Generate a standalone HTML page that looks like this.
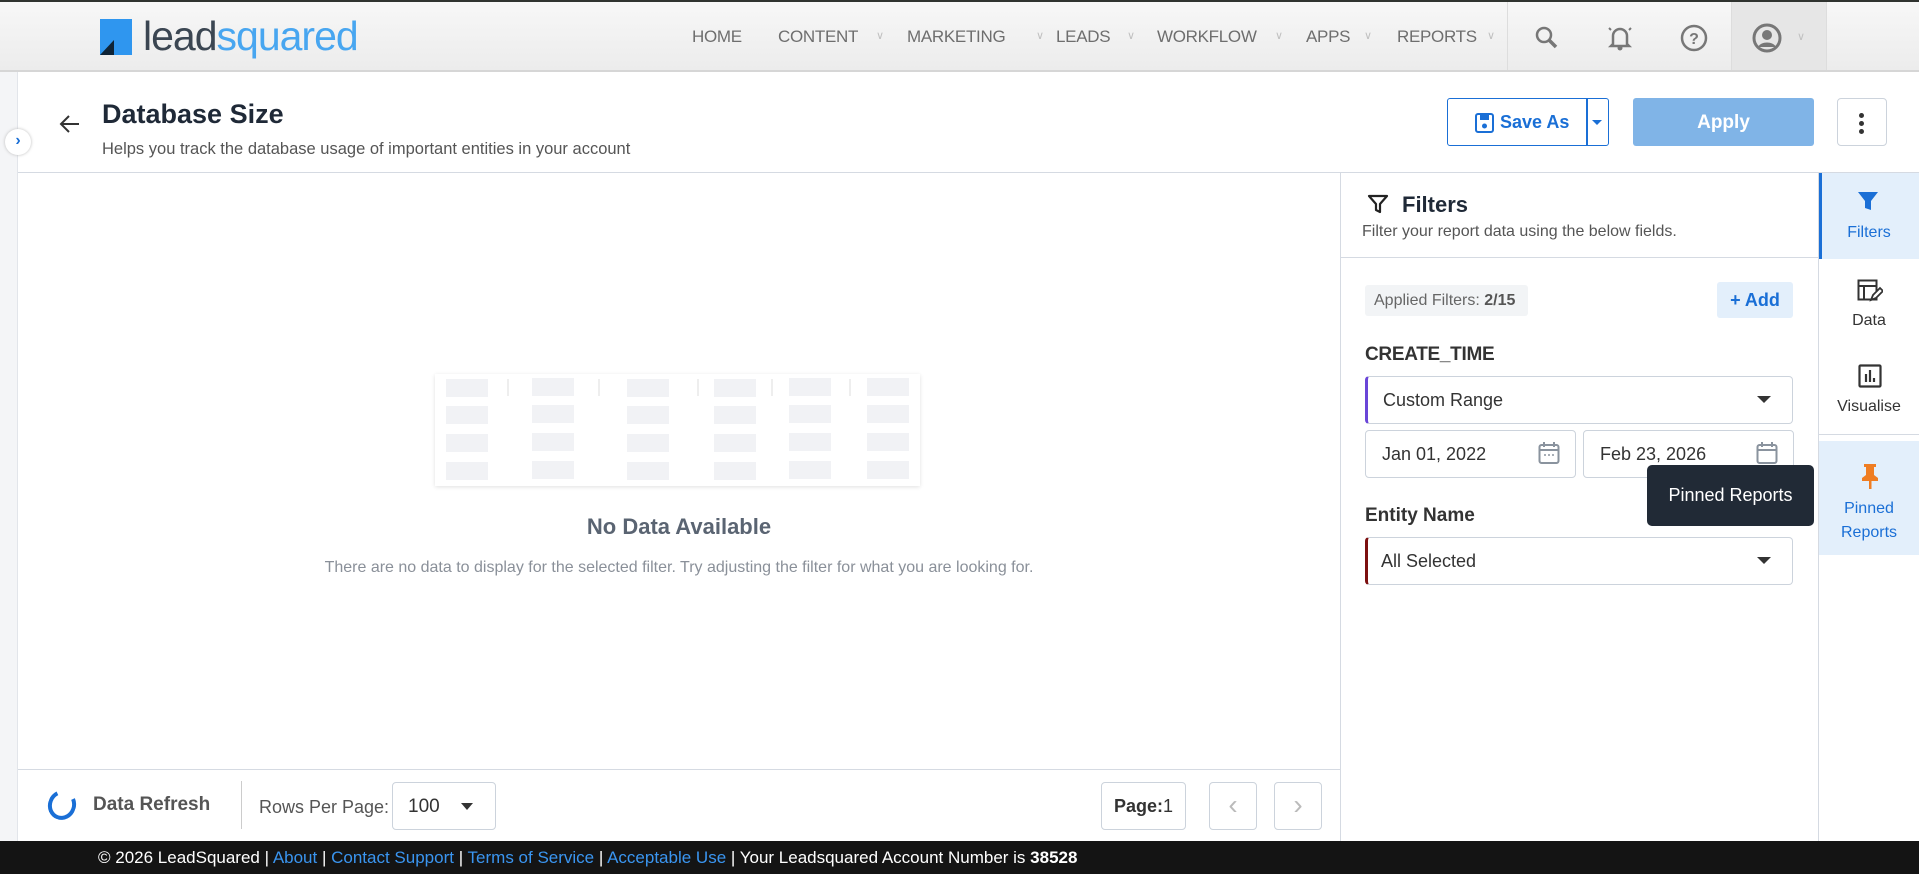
<!DOCTYPE html>
<html><head><meta charset="utf-8"><style>
*{box-sizing:border-box;margin:0;padding:0}
body{width:1919px;height:874px;overflow:hidden;font-family:"Liberation Sans",sans-serif;background:#fff;position:relative;color:#222}
.a{position:absolute}
.nav{left:0;top:0;width:1919px;height:72px;background:linear-gradient(#f7f7f7,#ececec);border-top:2px solid #2f332f;border-bottom:2px solid #d6d6d6}
.ni{top:27px;font-size:17px;color:#6e6e6e;letter-spacing:-0.3px}
.cv{top:29px;font-size:11px;color:#c0c0c0}
.bt{border:1px solid #ccd3dc;border-radius:4px;background:#fff}
.lbl{font-size:18px;color:#333}
</style></head><body>
<div class="a nav"></div>
<div class="a" style="left:100px;top:19px;width:32px;height:36px;background:#2f96ef"></div>
<div class="a" style="left:100px;top:40px;width:14px;height:15px;background:#0f2437"></div>
<div class="a" style="left:100px;top:40px;width:0;height:0;border-top:15px solid #2f96ef;border-right:14px solid transparent"></div>
<div class="a" style="left:143px;top:13px;font-size:41px;letter-spacing:-1px;color:#3b4652;font-weight:300">lead<span style="color:#48a6f0">squared</span></div>
<div class="a ni" style="left:692px">HOME</div>
<div class="a ni" style="left:778px">CONTENT</div><div class="a cv" style="left:876px">∨</div>
<div class="a ni" style="left:907px">MARKETING</div><div class="a cv" style="left:1036px">∨</div>
<div class="a ni" style="left:1056px">LEADS</div><div class="a cv" style="left:1127px">∨</div>
<div class="a ni" style="left:1157px">WORKFLOW</div><div class="a cv" style="left:1275px">∨</div>
<div class="a ni" style="left:1306px">APPS</div><div class="a cv" style="left:1364px">∨</div>
<div class="a ni" style="left:1397px">REPORTS</div><div class="a cv" style="left:1487px">∨</div>
<div class="a" style="left:1507px;top:2px;width:1px;height:68px;background:#ddd"></div>
<div class="a" style="left:1731px;top:2px;width:96px;height:68px;background:#e6e6e6;border-left:1px solid #ddd;border-right:1px solid #ddd"></div>
<svg class="a" style="left:1534px;top:25px" width="26" height="26" viewBox="0 0 26 26"><circle cx="10" cy="10" r="7" fill="none" stroke="#777" stroke-width="2.5"/><path d="M15 15l7 7" stroke="#777" stroke-width="3.5"/></svg>
<svg class="a" style="left:1607px;top:24px" width="26" height="28" viewBox="0 0 26 28"><path d="M6 20V12a7 7 0 0 1 14 0v8l2 2H4z" fill="none" stroke="#777" stroke-width="2.5"/><circle cx="13" cy="24" r="2.5" fill="#777"/><path d="M4 6l-2-2M22 6l2-2" stroke="#777" stroke-width="2"/></svg>
<svg class="a" style="left:1680px;top:24px" width="28" height="28" viewBox="0 0 28 28"><circle cx="14" cy="14" r="12" fill="none" stroke="#777" stroke-width="2.5"/><text x="14" y="20" font-size="16" font-weight="bold" text-anchor="middle" fill="#777" font-family="Liberation Sans">?</text></svg>
<svg class="a" style="left:1752px;top:23px" width="30" height="30" viewBox="0 0 30 30"><circle cx="15" cy="15" r="13" fill="none" stroke="#777" stroke-width="3"/><circle cx="15" cy="12" r="5" fill="#777"/><path d="M6 24c3-6 15-6 18 0" fill="#777"/></svg>
<div class="a cv" style="left:1797px;top:30px">∨</div>

<div class="a" style="left:0;top:72px;width:18px;height:769px;background:#f4f5f7;border-right:1px solid #e2e5ea"></div>
<div class="a" style="left:5px;top:129px;width:26px;height:26px;border-radius:50%;background:#fff;box-shadow:0 0 3px #bbb;color:#1a6fd6;font-size:16px;text-align:center;line-height:24px;font-weight:bold">›</div>
<svg class="a" style="left:59px;top:113px" width="22" height="22" viewBox="0 0 22 22"><path d="M20 11H3M10 3l-8 8 8 8" fill="none" stroke="#333" stroke-width="2"/></svg>
<div class="a" style="left:102px;top:99px;font-size:27px;font-weight:bold;color:#1f2937">Database Size</div>
<div class="a" style="left:102px;top:140px;font-size:16.5px;color:#555">Helps you track the database usage of important entities in your account</div>

<div class="a" style="left:1447px;top:98px;width:162px;height:48px;border:1.5px solid #1a6fd6;border-radius:3px"></div>
<div class="a" style="left:1586px;top:98px;width:1.5px;height:48px;background:#1a6fd6"></div>
<svg class="a" style="left:1475px;top:113px" width="19" height="20" viewBox="0 0 19 20"><rect x="1" y="1" width="17" height="18" rx="2" fill="none" stroke="#1a6fd6" stroke-width="2"/><rect x="5" y="2" width="9" height="5" fill="#1a6fd6"/><circle cx="9.5" cy="13" r="2.5" fill="#1a6fd6"/></svg>
<div class="a" style="left:1500px;top:112px;font-size:18px;font-weight:bold;color:#1a6fd6">Save As</div>
<div class="a" style="left:1592px;top:120px;border-left:5px solid transparent;border-right:5px solid transparent;border-top:5px solid #1a6fd6"></div>
<div class="a" style="left:1633px;top:98px;width:181px;height:48px;background:#80b4e7;border-radius:3px;color:#fff;font-size:19px;font-weight:bold;text-align:center;line-height:50px">Apply</div>
<div class="a bt" style="left:1837px;top:98px;width:50px;height:48px"></div>
<div class="a" style="left:1859px;top:113px;width:5px;height:5px;border-radius:50%;background:#333;box-shadow:0 8px 0 #333,0 16px 0 #333"></div>

<div class="a" style="left:18px;top:172px;width:1901px;height:1px;background:#d5dae2"></div>

<div class="a" style="left:435px;top:374px;width:485px;height:112px;background:#fff;box-shadow:0 1px 4px rgba(0,0,0,.12)"></div>
<div class="a" style="left:446px;top:379px;width:42px;height:18px;background:#f1f2f5;box-shadow:0 27px 0 #f1f2f5,0 55px 0 #f1f2f5,0 83px 0 #f1f2f5"></div>
<div class="a" style="left:532px;top:378px;width:42px;height:18px;background:#f1f2f5;box-shadow:0 27px 0 #f1f2f5,0 55px 0 #f1f2f5,0 83px 0 #f1f2f5"></div>
<div class="a" style="left:627px;top:379px;width:42px;height:18px;background:#f1f2f5;box-shadow:0 27px 0 #f1f2f5,0 55px 0 #f1f2f5,0 83px 0 #f1f2f5"></div>
<div class="a" style="left:714px;top:379px;width:42px;height:18px;background:#f1f2f5;box-shadow:0 27px 0 #f1f2f5,0 55px 0 #f1f2f5,0 83px 0 #f1f2f5"></div>
<div class="a" style="left:789px;top:378px;width:42px;height:18px;background:#f1f2f5;box-shadow:0 27px 0 #f1f2f5,0 55px 0 #f1f2f5,0 83px 0 #f1f2f5"></div>
<div class="a" style="left:867px;top:378px;width:42px;height:18px;background:#f1f2f5;box-shadow:0 27px 0 #f1f2f5,0 55px 0 #f1f2f5,0 83px 0 #f1f2f5"></div>
<div class="a" style="left:507px;top:379px;width:2px;height:17px;background:#eee;box-shadow:91px 0 0 #eee,190px 0 0 #eee,264px 0 0 #eee,342px 0 0 #eee"></div>
<div class="a" style="left:18px;top:514px;width:1322px;text-align:center;font-size:22px;font-weight:bold;color:#5a6472">No Data Available</div>
<div class="a" style="left:18px;top:559px;width:1322px;text-align:center;font-size:16px;color:#8a9099">There are no data to display for the selected filter. Try adjusting the filter for what you are looking for.</div>

<div class="a" style="left:18px;top:769px;width:1322px;height:1px;background:#d5dae2"></div>
<div class="a" style="left:48px;top:790px;width:28px;height:30px;border-radius:50%;border:4px solid #1a6fd6;border-top-color:transparent;transform:rotate(20deg)"></div>
<div class="a" style="left:93px;top:794px;font-size:19px;font-weight:bold;color:#555">Data Refresh</div>
<div class="a" style="left:241px;top:781px;width:1px;height:48px;background:#ccc"></div>
<div class="a" style="left:259px;top:797px;font-size:18px;color:#555">Rows Per Page:</div>
<div class="a bt" style="left:392px;top:782px;width:104px;height:48px"></div>
<div class="a" style="left:408px;top:796px;font-size:19px;color:#333">100</div>
<div class="a" style="left:461px;top:803px;border-left:6px solid transparent;border-right:6px solid transparent;border-top:7px solid #333"></div>
<div class="a bt" style="left:1101px;top:782px;width:85px;height:48px;text-align:center;line-height:46px;font-size:18px;color:#333"><b>Page:</b>1</div>
<div class="a bt" style="left:1209px;top:782px;width:48px;height:48px;text-align:center;line-height:44px;font-size:28px;color:#bbb">‹</div>
<div class="a bt" style="left:1274px;top:782px;width:48px;height:48px;text-align:center;line-height:44px;font-size:28px;color:#bbb">›</div>

<div class="a" style="left:1340px;top:172px;width:1px;height:669px;background:#d5dae2"></div>
<svg class="a" style="left:1367px;top:193px" width="22" height="22" viewBox="0 0 22 22"><path d="M2 3h18l-7 8v8l-4-2v-6z" fill="none" stroke="#222" stroke-width="2.2" stroke-linejoin="round"/></svg>
<div class="a" style="left:1402px;top:192px;font-size:22px;font-weight:bold;color:#1f2937">Filters</div>
<div class="a" style="left:1362px;top:223px;font-size:16px;color:#555">Filter your report data using the below fields.</div>
<div class="a" style="left:1341px;top:257px;width:478px;height:1px;background:#d5dae2"></div>
<div class="a" style="left:1365px;top:285px;width:163px;height:31px;background:#f2f4f6;border-radius:3px;font-size:16px;color:#666;line-height:31px;padding-left:9px">Applied Filters: <b style="color:#555">2/15</b></div>
<div class="a" style="left:1717px;top:282px;width:76px;height:36px;background:#e3effb;border-radius:3px;color:#1a6fd6;font-size:18px;font-weight:bold;line-height:36px;text-align:center">+ Add</div>
<div class="a" style="left:1365px;top:344px;font-size:19px;font-weight:bold;color:#333;letter-spacing:-0.3px">CREATE_TIME</div>
<div class="a bt" style="left:1365px;top:376px;width:428px;height:48px;border-left:3px solid #6a46d8"></div>
<div class="a lbl" style="left:1383px;top:390px">Custom Range</div>
<div class="a" style="left:1757px;top:396px;border-left:7px solid transparent;border-right:7px solid transparent;border-top:7px solid #333"></div>
<div class="a bt" style="left:1365px;top:430px;width:211px;height:48px"></div>
<div class="a lbl" style="left:1382px;top:444px">Jan 01, 2022</div>
<svg class="a" style="left:1538px;top:441px" width="22" height="24" viewBox="0 0 22 24"><rect x="1.5" y="4" width="19" height="18" rx="2" fill="none" stroke="#8a939e" stroke-width="2"/><path d="M1.5 9h19M6 1v5M16 1v5" stroke="#8a939e" stroke-width="2"/><path d="M6 14h2M10 14h2M14 14h2" stroke="#8a939e" stroke-width="1.5"/></svg>
<div class="a bt" style="left:1583px;top:430px;width:211px;height:48px"></div>
<div class="a lbl" style="left:1600px;top:444px">Feb 23, 2026</div>
<svg class="a" style="left:1756px;top:441px" width="22" height="24" viewBox="0 0 22 24"><rect x="1.5" y="4" width="19" height="18" rx="2" fill="none" stroke="#8a939e" stroke-width="2"/><path d="M1.5 9h19M6 1v5M16 1v5" stroke="#8a939e" stroke-width="2"/></svg>
<div class="a" style="left:1365px;top:505px;font-size:19px;font-weight:bold;color:#333">Entity Name</div>
<div class="a bt" style="left:1365px;top:537px;width:428px;height:48px;border-left:3px solid #7c1010"></div>
<div class="a lbl" style="left:1381px;top:551px">All Selected</div>
<div class="a" style="left:1757px;top:557px;border-left:7px solid transparent;border-right:7px solid transparent;border-top:7px solid #333"></div>

<div class="a" style="left:1818px;top:172px;width:1px;height:669px;background:#d5dae2"></div>
<div class="a" style="left:1819px;top:173px;width:100px;height:86px;background:#e3effb;border-left:3px solid #1a6fd6"></div>
<svg class="a" style="left:1857px;top:190px" width="22" height="22" viewBox="0 0 22 22"><path d="M1 2h20l-7 9v9l-6-2v-7z" fill="#1a6fd6"/></svg>
<div class="a" style="left:1819px;top:224px;width:100px;text-align:center;font-size:16px;color:#1a6fd6">Filters</div>
<svg class="a" style="left:1857px;top:279px" width="26" height="24" viewBox="0 0 26 24"><rect x="1.5" y="1.5" width="18" height="19" fill="none" stroke="#333" stroke-width="2"/><path d="M1.5 7h18M7 7v13" stroke="#333" stroke-width="2"/><path d="M14 21l2-5 7-7 3 3-7 7z" fill="#fff" stroke="#333" stroke-width="1.8"/></svg>
<div class="a" style="left:1819px;top:312px;width:100px;text-align:center;font-size:16px;color:#333">Data</div>
<svg class="a" style="left:1858px;top:364px" width="24" height="24" viewBox="0 0 24 24"><rect x="1.5" y="1.5" width="21" height="21" rx="1" fill="none" stroke="#333" stroke-width="2.2"/><path d="M8 18V10M12 18V6M16 18v-4" stroke="#333" stroke-width="2.2"/></svg>
<div class="a" style="left:1819px;top:398px;width:100px;text-align:center;font-size:16px;color:#333">Visualise</div>
<div class="a" style="left:1819px;top:434px;width:100px;height:1px;background:#d5dae2"></div>
<div class="a" style="left:1819px;top:441px;width:100px;height:114px;background:#e3effb"></div>
<svg class="a" style="left:1859px;top:462px" width="22" height="28" viewBox="0 0 22 28"><path d="M5 2h12v3h-2v8l4 3v3H3v-3l4-3V5H5z" fill="#ef7d22"/><rect x="10" y="18" width="2.5" height="9" fill="#ef7d22"/></svg>
<div class="a" style="left:1819px;top:497px;width:100px;text-align:center;font-size:16px;line-height:24px;color:#1a6fd6">Pinned<br>Reports</div>

<div class="a" style="left:1647px;top:465px;width:167px;height:61px;background:#212a36;border-radius:5px;color:#fff;font-size:18px;line-height:61px;text-align:center">Pinned Reports</div>

<div class="a" style="left:0;top:841px;width:1919px;height:33px;background:#141414;color:#fff;font-size:17px;line-height:33px;padding-left:98px;white-space:nowrap">© 2026 LeadSquared | <span style="color:#3a95f0">About</span> | <span style="color:#3a95f0">Contact Support</span> | <span style="color:#3a95f0">Terms of Service</span> | <span style="color:#3a95f0">Acceptable Use</span> | Your Leadsquared Account Number is <b>38528</b></div>
</body></html>
